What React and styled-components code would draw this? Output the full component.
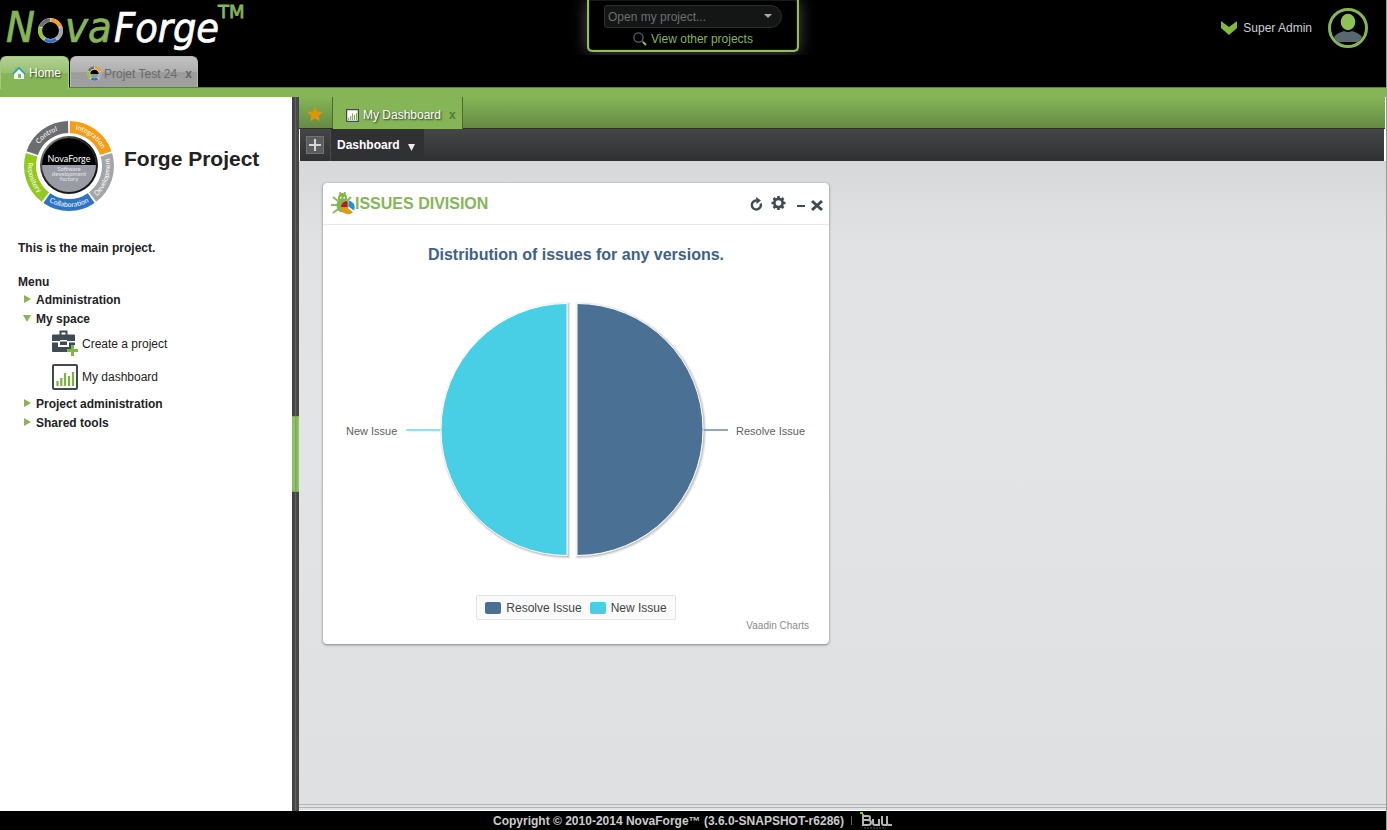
import React from 'react';
import styled, { createGlobalStyle, css } from 'styled-components';

const green = '#86b558';
const slate = '#3f4b54';

const GlobalStyle = createGlobalStyle`
  *, *::before, *::after { box-sizing: border-box; }
  body {
    margin: 0;
    background: #fff;
    color: #222;
    font: 12px/16px "Liberation Sans", Arial, sans-serif;
  }
  button, select { font: inherit; color: inherit; }
  h1, h2, h3, p, ul { margin: 0; padding: 0; }
  ul { list-style: none; }
  svg { display: block; flex: none; }
`;

const Page = styled.div`
  min-height: 100vh;
  display: flex;
  flex-direction: column;
  border-right: 1px solid #999;
`;

const Header = styled.header`
  background: #000;
  border-bottom: 9px solid ${green};
`;

const TopRow = styled.div`
  height: 56px;
  display: grid;
  grid-template-columns: 1fr 212px 1fr;
  align-items: start;
`;

const HomeLink = styled.a`
  justify-self: start;
`;

const ProjectPicker = styled.div`
  height: 52px;
  padding: 5px 15px 0;
  background: #000;
  border: 2px solid #8fc05e;
  border-top: 0;
  border-radius: 0 0 5px 5px;
  box-shadow: 0 0 16px rgba(255, 255, 255, 0.3), inset 0 0 1px #d8f0bd;
  display: flex;
  flex-direction: column;
  align-items: center;
  gap: 3px;
  clip-path: inset(0 -20px -3px -20px);
`;

const SelectWrap = styled.div`
  width: 178px;
  display: grid;
  align-items: center;
  > * { grid-area: 1 / 1; }
  svg { justify-self: end; margin-right: 10px; pointer-events: none; }
`;

const ProjectSelect = styled.select`
  appearance: none;
  width: 100%;
  height: 23px;
  padding: 0 24px 0 3px;
  color: #6b6e70;
  background: #141616;
  border: 1px solid #2c2e2f;
  border-radius: 3px 12px 12px 3px;
`;

const ProjectsLink = styled.a`
  display: flex;
  align-items: center;
  gap: 4px;
  color: ${green};
  text-decoration: none;
`;

const UserArea = styled.div`
  justify-self: end;
  display: flex;
  align-items: center;
  gap: 16px;
  padding: 8px 18px 0 0;
`;

const UserButton = styled.button`
  display: flex;
  align-items: center;
  gap: 5px;
  padding: 0;
  border: 0;
  background: none;
  color: #ccd0d3;
`;

const TopTabs = styled.nav`
  height: 32px;
  display: flex;
  gap: 1px;
  border-bottom: 1px solid #5c7e3b;
`;

const TopTab = styled.div`
  display: flex;
  align-items: center;
  height: ${p => (p.$active ? 33 : 31)}px;
  padding: ${p => (p.$active ? '0 7px 0 11px' : '3px 5px 0 16px')};
  border: 1px solid ${p => (p.$active ? '#a5c97f' : '#b8b8b8')};
  border-bottom: 0;
  border-radius: 6px 6px 0 0;
  background: ${p => p.$active
    ? `linear-gradient(#b3d194 0, #97c06f 50%, ${green} 52%, ${green})`
    : 'linear-gradient(#c2c2c2 0, #aeaeae 50%, #9c9c9c 52%, #a0a0a0)'};
`;

const TabLink = styled.a`
  display: flex;
  align-items: center;
  gap: ${p => p.$gap || 3}px;
  text-decoration: none;
  color: ${p => (p.$active ? '#fff' : '#6a6a6a')};
  ${p => p.$active && css`text-shadow: 1px 1px 2px rgba(0, 0, 0, 0.75);`}
`;

const CloseTab = styled.button`
  margin-left: 8px;
  padding: 0;
  border: 0;
  background: none;
  font-weight: bold;
  line-height: 14px;
  color: ${p => p.$color};
`;

const Body = styled.div`
  flex: 1;
  display: flex;
`;

const Sidebar = styled.aside`
  width: 292px;
  flex: none;
  padding: 22px 18px;
`;

const ProjectHead = styled.div`
  display: flex;
  align-items: center;
  gap: 8px;
  padding-left: 4px;
`;

const ProjectName = styled.h1`
  font-size: 21px;
  line-height: 28px;
  padding-bottom: 14px;
`;

const Intro = styled.p`
  margin: 27px 0 19px;
  font-weight: bold;
`;

const MenuTitle = styled.h2`
  font-size: 12px;
  line-height: 15px;
`;

const TreeRow = styled.button`
  display: flex;
  align-items: center;
  gap: 4px;
  height: 19px;
  padding: 0 0 0 4px;
  border: 0;
  background: none;
  font-weight: bold;
`;

const LeafRow = styled.a`
  display: flex;
  align-items: center;
  gap: 4px;
  height: 33px;
  padding: 0 0 2px 34px;
  color: inherit;
  text-decoration: none;
`;

const Splitter = styled.div`
  width: 7px;
  flex: none;
  display: flex;
  align-items: center;
  background: linear-gradient(90deg, #3b3b3b, #4c4c4c 45%, #606060 50%, #4a4a4a 60%, #444);
`;

const SplitHandle = styled.button`
  width: 7px;
  height: 76px;
  padding: 0;
  border: 0;
  background: linear-gradient(90deg, #8aba60, #96c76c 40%, #7da856 50%, #98ca70);
  border-block: 1px solid #7da856;
`;

const Main = styled.main`
  flex: 1;
  min-width: 0;
  display: flex;
  flex-direction: column;
`;

const DashTabs = styled.nav`
  height: 32px;
  margin-right: 1px;
  display: flex;
  background: linear-gradient(${green}, #658a43);
  border-bottom: 1px solid #2b3320;
`;

const Favourite = styled.button`
  width: 34px;
  padding: 2px 2px 0 0;
  border: 0;
  border-right: 1px solid #4d6a33;
  background: none;
  display: grid;
  place-items: center;
`;

const DashTab = styled.div`
  display: flex;
  align-items: center;
  height: 32px;
  padding: 4px 6px 0 13px;
  border-right: 1px solid #4d6a33;
  background: ${green};
`;

const Toolbar = styled.div`
  height: 32px;
  margin: 0 2px 0 1px;
  display: flex;
  background: linear-gradient(#444547, #303132);
`;

const AddCell = styled.div`
  width: 31px;
  display: grid;
  place-items: center;
  border-right: 1px solid #4a4b4c;
`;

const AddButton = styled.button`
  width: 18px;
  height: 18px;
  padding: 0;
  display: grid;
  place-items: center;
  background: #5b5c5d;
  border: 1px solid #717273;
`;

const MenuButton = styled.button`
  display: flex;
  align-items: center;
  gap: 8px;
  padding: 0 9px 0 6px;
  border: 0;
  background: #303132;
  color: #fff;
  font-weight: bold;
  svg { margin-top: 4px; }
`;

const Workspace = styled.section`
  flex: 1;
  padding: 22px 24px 24px;
  background: linear-gradient(#d7d8da, #e1e2e4 80px, #e3e4e6 260px, #dfe0e2);
`;

const BottomLines = styled.div`
  height: 9px;
  border-bottom: 1px solid #fff;
  background: repeating-linear-gradient(#dfe0e2 0 2px, #b4b5b7 2px 3px);
`;

const Portlet = styled.article`
  width: 506px;
  max-width: 100%;
  background: #fff;
  border-radius: 4px;
  box-shadow: 0 1px 3px rgba(0, 0, 0, 0.4), 0 0 1px rgba(0, 0, 0, 0.3);
`;

const PortletHead = styled.div`
  height: 42px;
  padding: 0 6px 0 8px;
  display: flex;
  align-items: center;
  border-bottom: 1px solid #e8e8e8;
`;

const PortletTitle = styled.h2`
  flex: 1;
  font-size: 16px;
  line-height: 20px;
  text-transform: uppercase;
  color: ${green};
`;

const ToolButton = styled.button`
  padding: 0;
  border: 0;
  background: none;
  margin-left: ${p => p.$gap}px;
`;

const Chart = styled.div`
  display: flex;
  flex-direction: column;
  align-items: center;
  padding: 20px 20px 12px;
`;

const ChartTitle = styled.h3`
  font-size: 16px;
  line-height: 20px;
  color: #3e6188;
`;

const Plot = styled.svg`
  width: 466px;
  max-width: 100%;
  height: 284px;
  margin: 23px 0;
  font: 11px "Liberation Sans", Arial, sans-serif;
`;

const Legend = styled.ul`
  display: flex;
  gap: 8px;
  padding: 4px 8px 3px;
  background: #fafafa;
  border: 1px solid #e2e2e2;
  border-radius: 2px;
  color: #444;
`;

const LegendItem = styled.li`
  display: flex;
  align-items: center;
  gap: 5px;
  &::before {
    content: '';
    width: 16px;
    height: 12px;
    border-radius: 2px;
    background: ${p => p.$color};
  }
`;

const Credits = styled.a`
  align-self: flex-end;
  font-size: 10px;
  line-height: 12px;
  color: #8a8a8a;
  text-decoration: none;
`;

const Footer = styled.footer`
  height: 19px;
  display: flex;
  justify-content: center;
  align-items: center;
  gap: 7px;
  background: #000;
  color: #ccc;
  font-weight: bold;
`;

const Divider = styled.span`
  width: 1px;
  height: 9px;
  background: #666;
`;

const polar = (r, deg, c) => {
  const a = (deg * Math.PI) / 180;
  return `${c + r * Math.sin(a)} ${c - r * Math.cos(a)}`;
};

const segmentColors = ['#f59d16', '#a3a5a8', '#2d74c8', '#93c823', '#6c6d71'];

function Ring({ c, r, width, gap }) {
  return segmentColors.map((color, i) => (
    <path
      key={color}
      d={`M${polar(r, i * 72 + gap, c)} A${r} ${r} 0 0 1 ${polar(r, (i + 1) * 72 - gap, c)}`}
      fill="none"
      stroke={color}
      strokeWidth={width}
    />
  ));
}

function Logo() {
  return (
    <svg width="250" height="54" viewBox="0 0 250 54" role="img" aria-label="NovaForge">
      <g
        fontFamily='"DejaVu Sans Condensed", "Noto Sans", sans-serif'
        fontStyle="italic"
        fontSize="41"
        strokeWidth="0.7"
      >
        <text x="6" y="42" fill={green} stroke={green} fontSize="43">N</text>
        <text x="65" y="42" fill={green} stroke={green} fontSize="43">va</text>
        <text x="114" y="42" fill="#fff" stroke="#fff">Forge</text>
      </g>
      <text
        x="218"
        y="18"
        fill={green}
        stroke={green}
        strokeWidth="0.8"
        fontFamily='"DejaVu Sans", sans-serif'
        fontSize="18"
      >
        TM
      </text>
      <g transform="translate(38 18)">
        <circle cx="12.5" cy="12.5" r="10.5" fill="none" stroke="#c9cdd2" strokeWidth="4" />
        <Ring c={12.5} r={10.5} width={3.4} gap={3} />
      </g>
    </svg>
  );
}

function Emblem() {
  const labels = [
    ['Integration', 36, true],
    ['Development', 108, false],
    ['Collaboration', 180, false],
    ['Repository', 252, false],
    ['Control', 324, true],
  ];
  return (
    <svg width="94" height="94" viewBox="0 0 94 94">
      <defs>
        <linearGradient id="rim" x1="0" y1="0" x2="1" y2="1">
          <stop offset="0" stopColor="#aaa" />
          <stop offset="0.4" stopColor="#222" />
          <stop offset="1" stopColor="#111" />
        </linearGradient>
      </defs>
      <Ring c={47} r={39} width={12} gap={1.3} />
      <circle cx="47" cy="46" r="29" fill="url(#rim)" />
      <circle cx="47" cy="46" r="27" fill="#9a9ca5" />
      <path d="M20 46a27 27 0 0 1 54 0z" fill="#000" />
      <g fontFamily='Lato, "Noto Sans", sans-serif' fill="#fff" textAnchor="middle">
        <text x="47" y="43" fontSize="9">NovaForge</text>
        <g fontSize="6" fill="#e2e3e6">
          <text x="47" y="52">Software</text>
          <text x="47" y="57">development</text>
          <text x="47" y="62">factory</text>
        </g>
        {labels.map(([text, mid, clockwise]) => {
          const r = clockwise ? 37 : 41;
          const from = clockwise ? mid - 36 : mid + 36;
          const to = clockwise ? mid + 36 : mid - 36;
          return (
            <g key={text} fontSize="7">
              <path
                id={`arc-${text}`}
                fill="none"
                d={`M${polar(r, from, 47)} A${r} ${r} 0 0 ${clockwise ? 1 : 0} ${polar(r, to, 47)}`}
              />
              <text><textPath href={`#arc-${text}`} startOffset="50%">{text}</textPath></text>
            </g>
          );
        })}
      </g>
    </svg>
  );
}

function MiniEmblem() {
  return (
    <svg width="15" height="16" viewBox="0 0 15 16">
      <circle cx="7.5" cy="8" r="7" fill="#ddd" />
      <Ring c={7.5} r={6} width={2.4} gap={4} />
      <circle cx="7.5" cy="8" r="4.2" fill="#999" />
      <path d="M3.3 8a4.2 4.2 0 0 1 8.400 0z" fill="#000" />
    </svg>
  );
}

function HouseIcon() {
  return (
    <svg width="14" height="14" viewBox="0 0 14 14">
      <path d="M3 1h2v4H3z" fill="#8fc43e" />
      <path d="M2 7l5-5 5 5v6H2z" fill="#f2f2f2" />
      <path d="M1 8l6-6 6 6" fill="none" stroke="#2f98c4" strokeWidth="1.6" />
      <path d="M6 8h3v4H6z" fill="#86b558" />
    </svg>
  );
}

function SearchIcon() {
  return (
    <svg width="14" height="14" viewBox="0 0 14 14" fill="none">
      <circle cx="5.5" cy="5.5" r="4.6" stroke="#56636b" strokeWidth="1.3" />
      <path d="M9 9l1.5 1.5" stroke="#56636b" strokeWidth="1.5" />
      <path d="M10 10l3 3" stroke="#8cc63f" strokeWidth="2" />
    </svg>
  );
}

function Avatar() {
  return (
    <svg width="40" height="40" viewBox="0 0 40 40" role="img" aria-label="Profile">
      <circle cx="20" cy="20" r="18.5" fill="#000" stroke={green} strokeWidth="3" />
      <ellipse cx="20" cy="14" rx="7.3" ry="8.3" fill="#8fc156" />
      <path d="M6 29c2-3 6-5 10-6q4 2 8 0c4 1 8 3 10 6q-2 4-4 5H10q-3-2-4-5z" fill="#596770" />
    </svg>
  );
}

function BriefcaseIcon() {
  return (
    <svg width="26" height="27" viewBox="0 0 26 27">
      <path d="M8.500 5V1.500h6V5" fill="none" stroke={slate} strokeWidth="2" />
      <path d="M1 4.500h21q1 0 1 1V11h-8v-1H8v1H0V5.500q0-1 1-1z" fill={slate} />
      <path d="M0 12.500h6V17h11v-4.500h6V15h-4v4h-4v3H1q-1 0-1-1z" fill={slate} />
      <path d="M8 11.500h7V15H8z" fill={slate} />
      <path d="M20.500 15v11M15 20.500h11" stroke="#7db643" strokeWidth="3" />
    </svg>
  );
}

function BarsIcon({ size = 26, frame = slate, thick = 2 }) {
  return (
    <svg width={size} height={size} viewBox="0 0 26 26">
      <rect x="1" y="1" width="24" height="24" rx="1" fill="#fff" stroke={frame} strokeWidth={thick} />
      <path d="M5.500 22v-5M9.300 22v-8M13 22V9M17 22V12M21 22V8" stroke="#7fb241" strokeWidth="2.200" />
    </svg>
  );
}

function Triangle({ open }) {
  return (
    <svg width="10" height="10" viewBox="0 0 10 10">
      <path d={open ? 'M1 1h8L5 8z' : 'M2 0l7 4-7 4z'} fill={green} />
    </svg>
  );
}

function BugIcon() {
  return (
    <svg width="24" height="24" viewBox="0 0 24 24">
      <g stroke="#8cba5c" strokeWidth="2" fill="none">
        <path d="M2 5l5 4M0 13h7M2 21l5-4M20 5l-4 4M10 4L9 0M13 4l1-4" />
      </g>
      <path d="M7 6a4.500 5 0 0 1 9 0v2H7z" fill="#84b64b" />
      <ellipse cx="11.500" cy="13.500" rx="6" ry="7" fill="#84b64b" />
      <path d="M9 5h1.500v1.500H9zM12.500 5H14v1.500h-1.500z" fill="#fff" />
      <path d="M16.500 15V9a6.500 6 0 0 0-6.500 6z" fill="#b91d22" />
      <path d="M17.500 14.500V8.500a7 7 0 0 1 5.500 10z" fill="#1e92cd" />
      <path d="M10 16h6.500l5.500 4A7 7 0 0 1 10 16z" fill="#e39a13" />
    </svg>
  );
}

function RefreshIcon() {
  return (
    <svg width="13" height="14" viewBox="0 0 13 14">
      <path d="M10.600 6.500a4.500 4.500 0 1 1-4-3" fill="none" stroke={slate} strokeWidth="2.400" />
      <path d="M6 0l5 3.500L6.500 7z" fill={slate} />
    </svg>
  );
}

function GearIcon() {
  return (
    <svg width="15" height="16" viewBox="0 0 15 16">
      <g stroke={slate} strokeWidth="2.600">
        <path d="M7.500 0v14M0.500 7h14M2.500 2l10 10M12.500 2l-10 10" />
      </g>
      <circle cx="7.500" cy="7" r="5.500" fill={slate} />
      <circle cx="7.500" cy="7" r="2.800" fill="#fff" />
    </svg>
  );
}

function BullLogo() {
  return (
    <svg width="34" height="18" viewBox="0 0 34 18" role="img" aria-label="Bull">
      <path d="M1 0h3v2H1zM3 2h2v2H3z" fill="#8cc63f" />
      <path d="M4 4v9h5q3 0 3-2.500T9 8H5M5 4h4q2 0 2 2T9 8M14 7v4q0 2 2 2h4V7M23 4v7q0 2 2 2h3M28 4v7q0 2 2 2h3" fill="none" stroke="#b5b5b5" strokeWidth="2" />
      <path d="M5 16h22" stroke="#5c5c5c" strokeDasharray="2 1" />
    </svg>
  );
}

function PieChart() {
  return (
    <Plot viewBox="3 0 466 284">
      <g fill="none" transform="translate(1 1)" stroke="#000">
        {[5, 3, 1].map(w => (
          <g key={w} strokeWidth={w} strokeOpacity={w === 5 ? 0.05 : 0.1}>
            <path d="M227 15.500A126 126 0 0 0 227 267.500Z" />
            <path d="M237 15.500A126 126 0 0 1 237 267.500Z" />
          </g>
        ))}
      </g>
      <path d="M66 142h35" stroke="#91e2f0" strokeWidth="2" />
      <path d="M363 142h25" stroke="#92a6bf" strokeWidth="2" />
      <path d="M227 15.500A126 126 0 0 0 227 267.500Z" fill="#48cfe6" stroke="#fff" />
      <path d="M237 15.500A126 126 0 0 1 237 267.500Z" fill="#4a7094" stroke="#fff" />
      <text x="6" y="147" fill="#606060">New Issue</text>
      <text x="396" y="147" fill="#606060">Resolve Issue</text>
    </Plot>
  );
}

export default function App() {
  return (
    <Page>
      <GlobalStyle />
      <Header>
        <TopRow>
          <HomeLink href="#"><Logo /></HomeLink>
          <ProjectPicker>
            <SelectWrap>
              <ProjectSelect aria-label="Open my project">
                <option>Open my project...</option>
              </ProjectSelect>
              <svg width="8" height="5" viewBox="0 0 8 5"><path d="M0 0h8L4 4z" fill="#aaa" /></svg>
            </SelectWrap>
            <ProjectsLink href="#"><SearchIcon />View other projects</ProjectsLink>
          </ProjectPicker>
          <UserArea>
            <UserButton type="button">
              <svg width="18" height="16" viewBox="0 0 18 16"><path d="M1 1l8 6 8-6v7l-8 7-8-7z" fill="#83b93f" /></svg>
              Super Admin
            </UserButton>
            <Avatar />
          </UserArea>
        </TopRow>
        <TopTabs>
          <TopTab $active>
            <TabLink href="#" $active><HouseIcon />Home</TabLink>
          </TopTab>
          <TopTab>
            <TabLink href="#" $gap={2}><MiniEmblem />Projet Test 24</TabLink>
            <CloseTab type="button" $color="#646464" aria-label="Close Projet Test 24">x</CloseTab>
          </TopTab>
        </TopTabs>
      </Header>

      <Body>
        <Sidebar>
          <ProjectHead>
            <Emblem />
            <ProjectName>Forge Project</ProjectName>
          </ProjectHead>
          <Intro>This is the main project.</Intro>
          <MenuTitle>Menu</MenuTitle>
          <ul>
            <li><TreeRow type="button"><Triangle />Administration</TreeRow></li>
            <li>
              <TreeRow type="button"><Triangle open />My space</TreeRow>
              <LeafRow href="#"><BriefcaseIcon />Create a project</LeafRow>
              <LeafRow href="#"><BarsIcon />My dashboard</LeafRow>
            </li>
            <li><TreeRow type="button"><Triangle />Project administration</TreeRow></li>
            <li><TreeRow type="button"><Triangle />Shared tools</TreeRow></li>
          </ul>
        </Sidebar>
        <Splitter><SplitHandle type="button" aria-label="Resize sidebar" /></Splitter>
        <Main>
          <DashTabs>
            <Favourite type="button" aria-label="Favourite">
              <svg width="16" height="16" viewBox="0 0 16 16">
                <path d="M8 0.500l2.300 5 5.400.6-4 3.700 1.100 5.400L8 12.500l-4.800 2.700 1.100-5.400-4-3.700 5.400-.6z" fill="#dd960c" />
              </svg>
            </Favourite>
            <DashTab>
              <TabLink href="#" $active $gap={4}><BarsIcon size={13} thick={3} />My Dashboard</TabLink>
              <CloseTab type="button" $color="#55773a" aria-label="Close My Dashboard">x</CloseTab>
            </DashTab>
          </DashTabs>
          <Toolbar>
            <AddCell>
              <AddButton type="button" aria-label="Add">
                <svg width="12" height="12" viewBox="0 0 12 12"><path d="M6 0v12M0 6h12" stroke="#d5d5d5" strokeWidth="2" /></svg>
              </AddButton>
            </AddCell>
            <MenuButton type="button">
              Dashboard
              <svg width="7" height="7" viewBox="0 0 7 7"><path d="M0 0h7L3.500 7z" fill="#eee" /></svg>
            </MenuButton>
          </Toolbar>
          <Workspace>
            <Portlet>
              <PortletHead>
                <BugIcon />
                <PortletTitle>Issues division</PortletTitle>
                <ToolButton type="button" aria-label="Refresh"><RefreshIcon /></ToolButton>
                <ToolButton type="button" aria-label="Settings" $gap={8}><GearIcon /></ToolButton>
                <ToolButton type="button" aria-label="Minimise" $gap={11}>
                  <svg width="9" height="14" viewBox="0 0 9 14"><path d="M0 9h8" stroke={slate} strokeWidth="2" /></svg>
                </ToolButton>
                <ToolButton type="button" aria-label="Close" $gap={5}>
                  <svg width="12" height="16" viewBox="0 0 12 16"><path d="M1 5l10 9M11 5L1 14" stroke={slate} strokeWidth="3" /></svg>
                </ToolButton>
              </PortletHead>
              <Chart>
                <ChartTitle>Distribution of issues for any versions.</ChartTitle>
                <PieChart />
                <Legend>
                  <LegendItem $color="#4a7094">Resolve Issue</LegendItem>
                  <LegendItem $color="#48cfe6">New Issue</LegendItem>
                </Legend>
                <Credits href="#">Vaadin Charts</Credits>
              </Chart>
            </Portlet>
          </Workspace>
          <BottomLines />
        </Main>
      </Body>

      <Footer>
        Copyright © 2010-2014 NovaForge™ (3.6.0-SNAPSHOT-r6286)
        <Divider />
        <BullLogo />
      </Footer>
    </Page>
  );
}
